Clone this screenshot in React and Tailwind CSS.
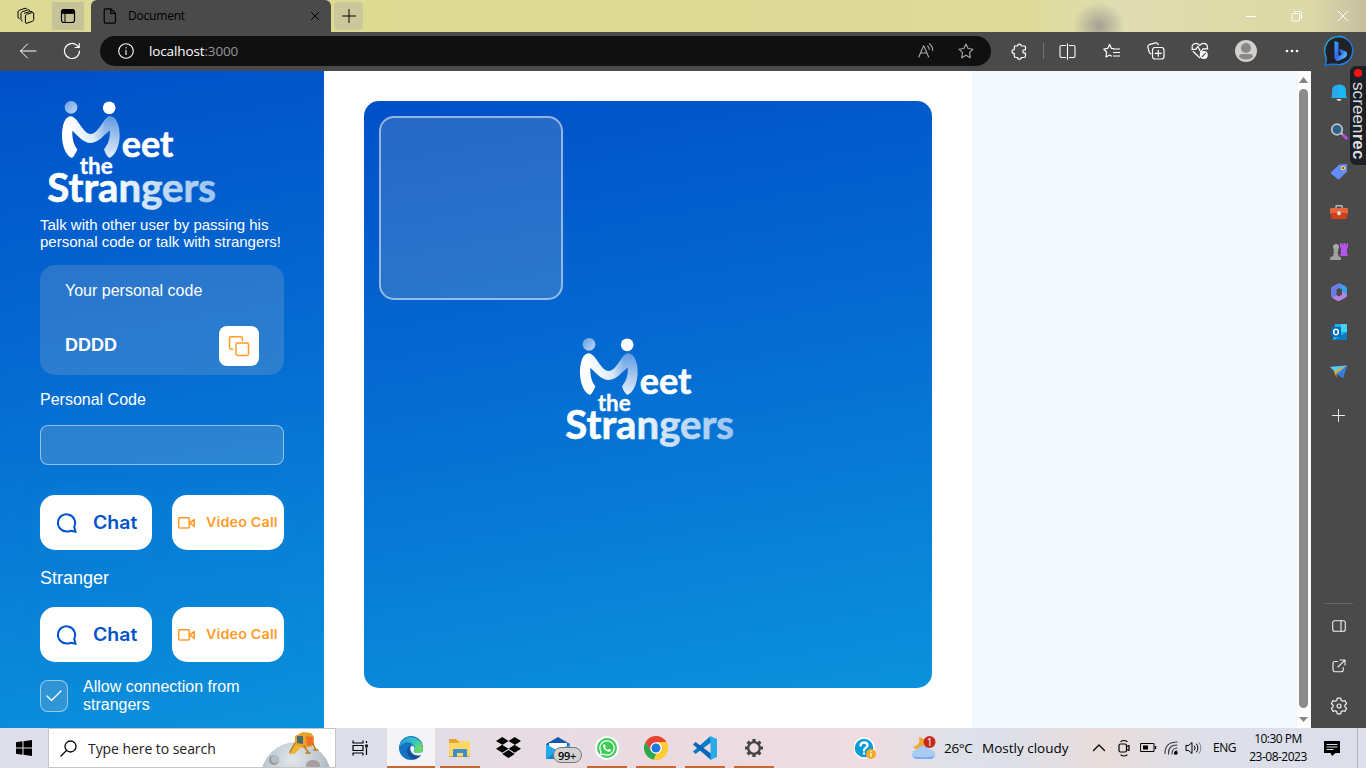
import React from "react";
import { FaDropbox, FaWhatsapp } from "react-icons/fa";

const UI = "font-['Open_Sans','Noto_Sans',sans-serif]";
const ARIAL = "font-['Liberation_Sans',Arial,sans-serif]";

function Svg({ w = 16, h, vb, className = "", children, sw = 1 }) {
  const hh = h || w;
  return (
    <svg width={w} height={hh} viewBox={vb || `0 0 ${w} ${hh}`} fill="none" stroke="currentColor" strokeWidth={sw} strokeLinecap="round" strokeLinejoin="round" className={`block shrink-0 ${className}`}>
      {children}
    </svg>
  );
}

function Logo({ id }) {
  return (
    <svg width="180" height="112" viewBox="30 24 540 336" className="block shrink-0 font-['Lato',sans-serif] font-bold">
      <defs>
        <linearGradient id={`${id}m`} gradientUnits="userSpaceOnUse" x1="125" y1="130" x2="238" y2="95">
          <stop offset="0" stopColor="#fff" />
          <stop offset=".5" stopColor="#dce9f8" />
          <stop offset="1" stopColor="#6ba1e3" />
        </linearGradient>
        <linearGradient id={`${id}r`} gradientUnits="userSpaceOnUse" x1="255" y1="85" x2="238" y2="205">
          <stop offset="0" stopColor="#659de2" />
          <stop offset="1" stopColor="#e8f1fb" />
        </linearGradient>
        <linearGradient id={`${id}h`} x1="0" y1="0" x2="1" y2="1">
          <stop offset="0" stopColor="#649fe5" />
          <stop offset="1" stopColor="#c1daf5" />
        </linearGradient>
        <linearGradient id={`${id}s`} gradientUnits="userSpaceOnUse" x1="54" y1="0" x2="556" y2="0">
          <stop offset="0" stopColor="#fff" />
          <stop offset=".35" stopColor="#fff" />
          <stop offset=".65" stopColor="#c9def6" />
          <stop offset="1" stopColor="#9cc4f0" />
        </linearGradient>
      </defs>
      <circle cx="123" cy="52" r="19" fill={`url(#${id}h)`} />
      <circle cx="237.500" cy="53.500" r="19" fill="#fff" />
      <path d="M122 79C104 79 96 108 96 137C96 170 109 198 126 204C132 200 139 188 142 178C131 164 126 145 127 122C139 131 158 159 182 159C205 159 226 132 239 121L240 79C222 79 207 132 182 132C158 132 143 79 122 79Z" fill={`url(#${id}m)`} />
      <path d="M240 79C259 79 270 107 269 139C268 171 255 198 238 204C230 199 225 188 222 178C234 163 241 145 239 121L226 133L222 98C228 86 234 79 240 79Z" fill={`url(#${id}r)`} />
      <text x="275" y="202" fontSize="111" textLength="155" lengthAdjust="spacingAndGlyphs" fill="#fff" stroke="#fff" strokeWidth="2">eet</text>
      <text x="149" y="251" fontSize="66" textLength="99" lengthAdjust="spacingAndGlyphs" fill="#fff" stroke="#fff" strokeWidth="1">the</text>
      <text x="52" y="337" fontSize="119" textLength="506" lengthAdjust="spacingAndGlyphs" fill={`url(#${id}s)`} stroke={`url(#${id}s)`} strokeWidth="2">Strangers</text>
    </svg>
  );
}

function TitleBar() {
  return (
    <header className="flex h-8 shrink-0 bg-[linear-gradient(90deg,#ddda96_0%,#dedb91_18%,#dcd994_45%,#dedb99_75%,#e0ddb3_82%,#dfdaa8_90%,#ddd8a8_96%,#c6bfa0_100%)] text-black">
      <div className="flex w-[52px] items-center justify-center">
        <Svg w={18}>
          <path d="M7.500 6.200l6-1.700q1.800-.4 2.200 1l1 .5v6.800q0 1-1 1.400l-5.800 2q-1.500.5-1.500-1V9q0-1.200 1-1.600l6-1.900M5.200 14q-1.200-.2-1.200-1.500V6.500q0-1.300 1.200-1.700l6-2q1.200-.3 1.600.8M2.300 11.500Q1 11.300 1 10V5q0-1.200 1.200-1.700L8 1.300q1.500-.4 1.800.7" />
        </Svg>
      </div>
      <div className="mt-0.5 flex h-7 w-8 items-center justify-center bg-[#c7c398]">
        <Svg w={16}>
          <rect x="1.500" y="1.500" width="13" height="13" rx="2.500" strokeWidth="1.200" />
          <path d="M1.500 5V3.500q0-2 2-2h9q2 0 2 2V5z" fill="black" />
          <path d="M5 5v9.500" />
        </Svg>
      </div>
      <div className="ml-[7px] flex w-60 items-center rounded-t-md bg-[#4a4a4a] pl-3 pr-[11px]">
        <Svg w={14} h={16} sw={1.2}>
          <path d="M2.500.8h5.300L12.500 5.500v8q0 1.700-1.700 1.700H2.500Q1.200 15.200 1.200 13.500v-11Q1.200.8 2.500.8zM7.800 1v4.500h4.500" />
        </Svg>
        <span className={`ml-[11px] flex-1 text-[12px] tracking-[-0.200px] ${UI}`}>Document</span>
        <Svg w={10}>
          <path d="M1.200 1.200l7.600 7.600M8.800 1.200L1.200 8.800" />
        </Svg>
      </div>
      <div className="ml-[3px] mt-0.5 flex h-7 w-[29px] items-center justify-center rounded bg-[#ccc89b]">
        <Svg w={14}>
          <path d="M7 .5v13M.5 7h13" />
        </Svg>
      </div>
      <div className="flex flex-1 justify-end pl-[706px]">
        <div className="mr-auto h-8 w-14 bg-[radial-gradient(26px_24px_at_30px_26px,#a3a191_0%,transparent_100%)]" />
        <div className="flex w-[46px] items-center justify-center text-white"><Svg w={10}><path d="M0 5.500h10" /></Svg></div>
        <div className="flex w-[46px] items-center justify-center text-white"><Svg w={12}><rect x="1" y="3.500" width="7.500" height="7.500" rx="1" /><path d="M3.500 1.500h5q2 0 2 2v5" /></Svg></div>
        <div className="flex w-[46px] items-center justify-center text-white"><Svg w={12}><path d="M1 1l10 10M11 1L1 11" /></Svg></div>
      </div>
    </header>
  );
}

function Tool({ className = "w-11", children }) {
  return <div className={`flex shrink-0 items-center justify-center ${className}`}>{children}</div>;
}

function Toolbar() {
  return (
    <div className="flex h-[39px] shrink-0 items-center bg-[#4a4a4a] pb-px text-white">
      <Tool className="w-14"><Svg w={18}><path d="M17 9H1.500M8.500 2L1.500 9l7 7" /></Svg></Tool>
      <Tool className="w-8">
        <Svg w={18} sw={1.2}><path d="M16.500 9a7.500 7.500 0 1 1-2.500-5.600L16 5.500M16.200 1.500v4h-4" /></Svg>
      </Tool>
      <div className="ml-3 flex h-[30px] w-[891px] items-center rounded-full bg-[#101010] pl-[18px] pr-[17px]">
        <Svg w={16} sw={1.1}><circle cx="8" cy="8" r="7.300" /><path d="M8 7.200v4.300M8 4.600v.3" /></Svg>
        <span className={`ml-[15px] flex-1 text-[13.500px] tracking-[-0.130px] ${UI}`}>localhost<span className="text-[#969696]">:3000</span></span>
        <Svg w={16} className="mr-6 text-[#aaa]" sw={1.1}><path d="M.8 14L5.500 3h.4l4.700 11M2.700 10h6M9.500 3q1.700 1.300 1.700 3.400M11.300.8q3.600 2.500 3.300 6.600" /></Svg>
        <Svg w={16} className="text-[#aaa]" sw={1.1}><path d="M8 1l2.100 4.500 4.900.7-3.500 3.500.8 5L8 12.300l-4.300 2.400.8-5L1 6.200l4.900-.7z" /></Svg>
      </div>
      <Tool className="ml-[6px] w-11">
        <Svg w={17} sw={1.2}><path d="M3.500 3h3.200q-.3-1.800 1.700-1.800t1.800 1.800h3.300q1 0 1 1v2.800h-1q-1.700 0-1.700 1.700t1.700 1.700h1V13q0 1.500-1.500 1.500h-2.800q.2 1.700-1.800 1.700t-1.700-1.700H5q-1.800 0-1.800-1.700v-2.400Q1 10.500 1 8.600t2.200-1.900z" /></Svg>
      </Tool>
      <div className="ml-[2px] h-4 w-px bg-[#747474]" />
      <Tool className="ml-[1px] w-11"><Svg w={17} sw={1.1}><path d="M6.500 2.500h-4q-1.500 0-1.500 1.500v9q0 1.500 1.500 1.500h4M10.500 2.500h4q1.500 0 1.500 1.500v9q0 1.500-1.500 1.500h-4M8.500.8v15.400" /></Svg></Tool>
      <Tool><Svg w={17} sw={1.2}><path d="M10.500 5.700L8.500 5.400 6.600 1.400 4.700 5.400.8 6 3.600 9 3 14l3.600-2 1.700 1M10.500 6h6M10.500 9.500h6M10.500 13h6" /></Svg></Tool>
      <Tool className="w-[45px]"><Svg w={18} sw={1.2}><rect x="5.500" y="5.500" width="11.500" height="11.500" rx="2.500" /><path d="M11.250 8.300v6M8.250 11.300h6M4 11.800q-1.500-.3-1.800-1.600L.9 5.300q-.4-2 1.300-2.600L8.600.9q1.900-.4 2.700 1.800" /></Svg></Tool>
      <Tool>
        <Svg w={18} sw={1.2}><path d="M8.500 15.500L2.200 9.500M1.200 6.500q-.8-4.600 3.600-5.200Q7 1.200 8.700 3.500 10.500 1.200 12.800 1.300q4.300.6 3.500 5M.8 7.300h4l2-3 3 6 2-3.500h5" /><circle cx="12.800" cy="13" r="4" fill="white" stroke="none" /><path d="M11.200 14.700l3.200-3.300" stroke="#444" /></Svg>
      </Tool>
      <Tool className="w-[47px]">
        <Svg w={22}><g stroke="none"><circle cx="11" cy="11" r="11" fill="#d2d0ce" /><circle cx="11" cy="8" r="5" fill="#8a8886" /><path d="M4 17q0-3 3-3h8q3 0 3 3a11 11 0 0 1-14 0" fill="#8a8886" /></g></Svg>
      </Tool>
      <Tool className="w-[46px]"><Svg w={14} h={4}><g fill="white" stroke="none"><circle cx="2" cy="2" r="1.300" /><circle cx="7" cy="2" r="1.300" /><circle cx="12" cy="2" r="1.300" /></g></Svg></Tool>
      <Tool className="ml-[9px] w-[30px]">
        <Svg w={30} h={32}>
          <defs>
            <linearGradient id="ring" x1="0" y1="0" x2="1" y2="1"><stop stopColor="#25c7e5" /><stop offset=".55" stopColor="#1672e0" /><stop offset="1" stopColor="#2587ff" /></linearGradient>
            <linearGradient id="bing" x1="0" y1="0" x2="1" y2="1"><stop stopColor="#2fa8ff" /><stop offset=".5" stopColor="#3268f2" /><stop offset="1" stopColor="#62e2ff" /></linearGradient>
          </defs>
          <path d="M1.200 30.500Q3 26 1.800 21A14 14 0 1 1 12 29.300Q6 28.800 1.200 30.500z" fill="#202124" stroke="url(#ring)" strokeWidth="1.400" />
          <path d="M10.500 6l4 1.400v13.800l4-2.400-1.900-.9-1.500-4 6 2.200q2.700 1.200 1.800 4.200-.6 1.800-2.400 2.800L15 25.600q-1.300.7-2.600 0-1.900-1-1.900-3.100z" fill="url(#bing)" stroke="none" />
        </Svg>
      </Tool>
    </div>
  );
}

function ActionRow() {
  return (
    <div className="flex gap-5 font-['Inter',sans-serif] font-semibold">
      <button className="flex h-[55px] w-28 items-center rounded-[15px] bg-white pl-[17px] text-[18px] text-[#0352cc] shadow-[0_0_20px_rgba(20,150,220,0.3)]">
        <Svg w={20} sw={2}><path d="M17.200 13.800A8.600 8.600 0 1 0 10 18.500q2.500.2 4.200-.8l4.200 1z" strokeLinejoin="miter" /></Svg>
        <span className="ml-4 inline-block origin-left scale-x-[1.08]">Chat</span>
      </button>
      <button className="flex h-[55px] w-28 items-center rounded-[15px] bg-white pl-[5px] text-[13px] text-[#ff9b29] shadow-[0_0_20px_rgba(20,150,220,0.3)]">
        <Svg w={20} h={14} sw={1.6}><rect x="1.700" y="1.700" width="10.600" height="10.300" rx="1" /><path d="M12.800 6.900L17.200 3.500v7z" /></Svg>
        <span className="ml-[9px] inline-block origin-left scale-x-[1.1] whitespace-nowrap tracking-[0.150px]">Video Call</span>
      </button>
    </div>
  );
}

function Dashboard() {
  return (
    <aside className={`flex w-[324px] shrink-0 flex-col overflow-hidden bg-[linear-gradient(170deg,#0050c8_0%,#056cd2_45%,#0b92dc_100%)] px-10 text-white ${ARIAL}`}>
      <div className="mt-[27px]"><Logo id="side" /></div>
      <p className="mt-[6px] whitespace-nowrap text-[15px] leading-[17px]">Talk with other user by passing his<br />personal code or talk with strangers!</p>
      <section className="mt-[15px] flex h-[110px] shrink-0 flex-col rounded-[15px] bg-[rgba(196,196,196,0.2)] px-[25px] pt-[17px]">
        <p className="text-[16px] leading-[18px]">Your personal code</p>
        <div className="mt-[26px] flex items-center justify-between">
          <p className="pb-[2px] text-[18px] font-bold leading-5">DDDD</p>
          <button className="flex size-10 items-center justify-center rounded-lg bg-white text-[#ff9b29]">
            <Svg w={22} sw={1.5}><path d="M14.300 5.500V3.300q0-1.500-1.500-1.500H3Q1.500 1.800 1.500 3.300v9.200Q1.500 14.200 3 14.200h1.700" /><rect x="8" y="8" width="12.500" height="12.500" rx="1.700" /></Svg>
          </button>
        </div>
      </section>
      <p className="mt-4 text-[16px] leading-[18px]">Personal Code</p>
      <div className="mb-[30px] mt-4 h-10 shrink-0 rounded-lg border border-white/50 bg-[rgba(196,196,196,0.2)]" />
      <ActionRow />
      <p className="mb-[19px] mt-[18px] text-[18px] leading-5">Stranger</p>
      <ActionRow />
      <div className="mt-4 flex">
        <div className="mt-[2px] flex h-8 w-7 items-center justify-center rounded-lg border border-white/50 bg-[rgba(196,196,196,0.2)]">
          <Svg w={16} h={12} sw={1.4}><path d="M1 6l4.500 4.500L15 1" /></Svg>
        </div>
        <p className="ml-[15px] whitespace-nowrap text-[16px] leading-[18px]">Allow connection from<br />strangers</p>
      </div>
    </aside>
  );
}

function CallArea() {
  return (
    <main className="w-[648px] shrink-0 bg-white px-10 pt-[30px]">
      <div className="relative flex h-[587px] items-center justify-center rounded-[15px] bg-[linear-gradient(170deg,#0050c8_0%,#056cd2_45%,#0b92dc_100%)]">
        <div className="absolute left-[15px] top-[15px] size-[184px] rounded-[15px] border-2 border-white/50 bg-[rgba(196,196,196,0.2)]" />
        <div className="mb-[7px]"><Logo id="call" /></div>
      </div>
    </main>
  );
}

function Scrollbar() {
  return (
    <div className="flex w-[13px] shrink-0 flex-col items-center bg-[#fcfcfc] pb-[5px] pr-[2px] pt-1.5">
      <Svg w={9} h={7}><path d="M4.500 0L9 6H0z" fill="#858585" stroke="none" /></Svg>
      <div className="mb-2 mt-[5px] w-[9px] flex-1 rounded-full bg-[#8b8b8b]" />
      <Svg w={9} h={7}><path d="M0 1h9L4.500 6z" fill="#858585" stroke="none" /></Svg>
    </div>
  );
}

function EdgeRail() {
  return (
    <div className="flex w-[55px] shrink-0 flex-col items-center bg-[#4a4a4a] text-[#eee]">
      <div className="flex h-[321px] w-full flex-col items-center pt-px">
        <div className="flex h-10 items-center"><Svg w={18}><g stroke="none"><path d="M2 13V8q0-6.500 7-6.500T16 8v5l1 2H1z" fill="#27a9ee" /><path d="M9 1.500q7 0 7 6.500v5l1 2H9z" fill="#16c1f2" opacity=".7" /><path d="M6.500 16h5q-.5 2-2.500 2t-2.500-2" fill="#ddd" /></g></Svg></div>
        <div className="flex h-10 items-center"><Svg w={18}><circle cx="7" cy="6.500" r="5.300" fill="#2d6388" stroke="#bdc4c7" strokeWidth="1.700" /><path d="M11.500 10.500l2 1.700" stroke="#c8c8c8" strokeWidth="2" /><path d="M13.500 12.500l3 2.700" stroke="#b54bee" strokeWidth="3" /></Svg></div>
        <div className="flex h-10 items-center"><Svg w={18}><path d="M9.500 1.500L17 1v7.500L9.500 16q-1 .8-2 0L1.200 10.700q-.8-.9 0-1.800z" fill="#648bff" stroke="none" /><circle cx="13" cy="5" r="1.700" fill="#34518b" stroke="#ffd33b" strokeWidth="1.300" /></Svg></div>
        <div className="flex h-10 items-center"><Svg w={18}><path d="M6 5V3.500q0-.8.800-.8h4.500q.8 0 .8.800V5" stroke="#bbb" strokeWidth="1.500" /><g stroke="none"><rect y="5" width="18" height="6" rx="1" fill="#e7653a" /><path d="M1 10h16v5q0 1-1 1H2q-1 0-1-1z" fill="#cf4019" /><rect x="7.300" y="8.300" width="3.400" height="4" rx="1" fill="#ddd" /></g></Svg></div>
        <div className="flex h-10 items-center"><Svg w={18} h={20}><g stroke="none"><path d="M10 1h2v1.500h1.500V1h2v1.500H17V1h1v4l-1 1v5l1 3H10l1-3V6l-1-1z" fill="#b653ed" /><circle cx="6" cy="5" r="3" fill="#aaa" /><path d="M3 8h6l-1.500 2 1 4 2.500 1.500V18h-11v-2.500L3 14l1-4z" fill="#a1a1a1" /></g></Svg></div>
        <div className="flex h-10 items-center"><Svg w={18} h={20}><g stroke="none"><path d="M9 1l6.500 3.300Q17 5.100 17 7v7L12 11.500v-4L8.500 5.500z" fill="#37a3ef" /><path d="M9 1L2.500 4.500Q1 5.300 1 7v6q0 1.500 1.500 2.500L6.500 13V7.500L12 4.500z" fill="#6a7de6" /><path d="M17 12.500v1q0 1.300-1.300 2L10 18.800q-1.500.6-3 0L1.700 15.500 6.500 13 9 14.500l3-2v-3z" fill="#b183e3" /></g></Svg></div>
        <div className="flex h-10 items-center"><Svg w={18}><g stroke="none"><path d="M5 1h11q1 0 1 1v15H3v-5z" fill="#1bb0ed" /><path d="M11 1h5q1 0 1 1v7h-6z" fill="#49d2f8" /><path d="M4 17l13-8v8z" fill="#087bc3" /><rect x="1" y="4" width="10" height="10" rx="1" fill="#0568b4" /></g><ellipse cx="6" cy="9" rx="2.300" ry="2.700" stroke="white" strokeWidth="1.500" /></Svg></div>
        <div className="flex h-10 items-center"><Svg w={18}><g stroke="none"><path d="M0 4l17-1.500L13 15 6.500 10.500z" fill="#3ba1e9" /><path d="M0 4l17-1.500L5.500 9z" fill="#57cbed" /><path d="M17 2.500L6.500 10v4.700L4 8.500z" fill="#f2a91e" /><path d="M17 2.500L8 10.800l5 4.200z" fill="#3979de" /></g></Svg></div>
      </div>
      <Svg w={13} className="mt-[17px]"><path d="M6.500.5v12M.5 6.500h12" /></Svg>
      <div className="mt-[181px] h-px w-7 bg-[#656565]" />
      <Svg w={14} h={12} className="mt-4" sw={1.1}><rect x=".7" y=".7" width="12.600" height="10.600" rx="2" /><path d="M9 .7v10.600" /></Svg>
      <Svg w={14} className="mt-[27px]" sw={1.1}><path d="M5.500 2.500H3Q1 2.500 1 4.500v6Q1 12.700 3 12.700h6.200q2 0 2-2V8.500M8 1h5v5M6 8l6.700-6.700" /></Svg>
      <Svg w={18} className="mt-6" sw={1.2}><circle cx="9" cy="9" r="2" /><path d="M7.300 1.200h3.400l.6 2.300 1.300.8 2.300-.7 1.700 2.900L14.900 8.200v1.600l1.700 1.700-1.700 2.900-2.300-.7-1.300.8-.6 2.300H7.300l-.6-2.300-1.300-.8-2.300.7-1.700-2.900L3.100 9.800V8.200L1.400 6.500l1.700-2.900 2.300.7 1.300-.8z" /></Svg>
    </div>
  );
}

function TaskApp({ children, active, line = true }) {
  return (
    <div className="flex w-[49px] shrink-0 justify-center">
      <div className={`flex h-10 flex-col items-center ${active ? "w-12 bg-[#f4f3f6]" : "w-10"}`}>
        <div className="flex h-[38px] items-center justify-center pt-[2px]">{children}</div>
        {line && <div className="h-0.5 w-full bg-[#cc652e]" />}
      </div>
    </div>
  );
}

function Taskbar() {
  return (
    <footer className={`flex h-10 shrink-0 items-center overflow-hidden bg-[linear-gradient(90deg,#dedeeb_0%,#dcdeea_27%,#e7dce4_36%,#ebdbe0_50%,#eedde1_64%,#dde1e9_70%,#dee0e9_74%,#e8dcd9_81%,#dedfe9_87%,#dcdeeb_100%)] text-black ${UI}`}>
      <div className="flex w-12 shrink-0 justify-center">
        <Svg w={16}><path d="M0 2.200l6.500-.9v6.200H0zM7.500 1.200L16 0v7.500H7.500zM0 8.500h6.500v6.200L0 13.800zM7.500 8.500H16V16l-8.500-1.200z" fill="black" stroke="none" /></Svg>
      </div>
      <div className="flex h-10 w-72 shrink-0 items-center border border-[#c5c5c8] bg-white pl-[11px]">
        <Svg w={17} sw={1.3}><circle cx="10.500" cy="6.500" r="5.500" /><path d="M6.500 10.500L1 16" /></Svg>
        <span className="ml-[11px] w-[174px] whitespace-nowrap text-[14px] tracking-[-0.060px] text-[#222]">Type here to search</span>
        <Svg w={72} h={36} className="self-end">
          <defs><radialGradient id="moon" cx=".45" cy=".25" r=".7"><stop stopColor="#e1e6e9" /><stop offset=".6" stopColor="#bcc6ce" /><stop offset="1" stopColor="#8d9aa4" /></radialGradient></defs>
          <g stroke="none">
            <circle cx="34" cy="46" r="35" fill="url(#moon)" />
            <circle cx="12" cy="29" r="5" fill="#8d99a3" /><circle cx="13" cy="28" r="4" fill="#b4bec7" />
            <ellipse cx="51" cy="34" rx="7" ry="5" fill="#a59fa2" />
            <path d="M33 5l8-4 8 1 3 4-1 9-9 2-9-2z" fill="#e6a326" />
            <path d="M35 5h6v8l-6-1z" fill="#486b72" /><path d="M44 5l7 1 1 8-7 1z" fill="#ef6e23" />
            <path d="M32 14l8 2-8 7h-5z" fill="#efb634" />
          </g>
          <path d="M42 15l4 6M51 13l3 6M33 12l-5 9M44 22h4M52 19h4" stroke="#bc7c14" strokeWidth="1.500" />
        </Svg>
      </div>
      <div className="flex w-[48px] shrink-0 justify-center">
        <Svg w={16}><path d="M1 .5V3h10V.5M1 15.500V13h10v2.500M1 5.500h10v5H1zM14.500 1v2M14.500 8v7" strokeWidth="1.200" strokeLinecap="butt" /><path d="M13.200 4.500h2.600v3h-2.600z" fill="black" stroke="none" /></Svg>
      </div>
      <div className="flex shrink-0 pl-[2px]">
        <TaskApp active>
          <Svg w={24}>
            <defs><linearGradient id="edgeTop" x1="0" y1="0" x2="1" y2=".5"><stop stopColor="#229edb" /><stop offset=".6" stopColor="#35c2c3" /><stop offset="1" stopColor="#67dc63" /></linearGradient></defs>
            <g stroke="none">
              <circle cx="12" cy="12" r="12" fill="#1473c4" />
              <path d="M.3 10.500A12 12 0 0 1 24 12.500q-.5 4.500-5.200 4.500-3.500 0-4.200-1.500 2.500-3 .5-6Q9 2.500.3 10.500z" fill="url(#edgeTop)" />
              <path d="M11 9.500Q6 13 9 19q3 5 8 4 4-1.500 5.500-4.500-4 2-8.500 0-5-3-3-9" fill="#174e91" />
              <path d="M14 9.800q3 2.200.5 5.700 1.500 2 5 1.500l4.500-1-1.500 3q-6 1.500-9-1.500-3.500-4-1.500-7.200 1-.8 2-.5" fill="#f4f3f6" />
            </g>
          </Svg>
        </TaskApp>
        <TaskApp>
          <Svg w={22} h={20}><g stroke="none"><path d="M0 1h7l2 2h12v16H0z" fill="#e6a52a" /><path d="M0 5h9l2-2h10v15H0z" fill="#ffd668" /><path d="M4 19v-7q0-1 1-1h12q1 0 1 1v7h-4v-4H8v4z" fill="#3d8ccd" /></g></Svg>
        </TaskApp>
        <TaskApp line={false}><div className="pb-[2px]"><FaDropbox size={25} /></div></TaskApp>
        <TaskApp line={false}>
          <div className="relative">
            <Svg w={24}><g stroke="none"><path d="M0 8l12-7 12 7v14H0z" fill="#1559a8" /><path d="M3 7h18v8H3z" fill="#fff" /><path d="M0 8l12 7 12-7v15H0z" fill="#25a9e8" /><path d="M0 23l12-9 12 9z" fill="#0c86d3" /></g></Svg>
            <span className="absolute left-[7px] top-[11px] flex h-4 w-[29px] items-center justify-center rounded-full border border-[#777] bg-[#d2d2d2] text-[11px] font-semibold leading-none tracking-[-0.300px]">99+</span>
          </div>
        </TaskApp>
        <TaskApp><div className="flex size-6 items-center justify-center rounded-full border-2 border-white bg-[#3bcc55] text-white"><FaWhatsapp size={18} /></div></TaskApp>
        <TaskApp>
          <Svg w={24}><g stroke="none"><circle cx="12" cy="12" r="12" fill="#ffcc37" /><path d="M1.600 6A12 12 0 0 1 22.400 6H12z" fill="#e84435" /><path d="M1.600 6L7 15l5 3-2.500 5.700A12 12 0 0 1 1.600 6z" fill="#2ca755" /><path d="M1.600 6H14l-7 9z" fill="#e84435" /><path d="M1.600 6L7 15l2 2-3-1z" fill="#2ca755" /><path d="M12 6h10.400A12 12 0 0 1 9.500 23.700L17 15z" fill="#ffcc37" /><circle cx="12" cy="12" r="5.800" fill="white" /><circle cx="12" cy="12" r="4.500" fill="#1b78e5" /></g></Svg>
        </TaskApp>
        <TaskApp>
          <Svg w={24}><g stroke="none"><path d="M17.500 0L0 15.500l2.500 2.500L18 6.500z" fill="#087cc7" /><path d="M0 8.500L2.500 6 18 17.500V24z" fill="#0966b8" /><path d="M17.500 0v24L24 21V3z" fill="#29abe9" /></g></Svg>
        </TaskApp>
        <TaskApp>
          <Svg w={20}><circle cx="10" cy="10" r="5.800" stroke="#444" strokeWidth="2.300" /><path d="M10 1v3M10 16v3M1 10h3M16 10h3M3.600 3.600l2.200 2.200M14.200 14.200l2.200 2.200M16.400 3.600l-2.200 2.200M5.800 14.200l-2.200 2.200" stroke="#444" strokeWidth="3.200" strokeLinecap="butt" /></Svg>
        </TaskApp>
      </div>
      <div className="ml-[76px] shrink-0">
        <Svg w={22}><g stroke="none"><circle cx="10" cy="11" r="10" fill="#0b9bd7" stroke="white" strokeWidth="1.500" /><circle cx="17" cy="17" r="5" fill="#f4aa21" /></g><path d="M6.500 8.500Q7 5.500 10 5.500q3.500 0 3.500 2.800 0 1.700-2 2.700-1.500.8-1.500 2.500M10 16.500v.2" stroke="white" strokeWidth="2.300" /><path d="M17 16.500v2.700M17 14.500v.1" stroke="white" strokeWidth="1.300" /></Svg>
      </div>
      <div className="ml-[35px] shrink-0">
        <Svg w={26} h={26}><g stroke="none"><path d="M8 2Q10 10 2 12q6 6 12 0 4-7-6-10" fill="#f4a62b" /><path d="M6 24Q1 24 1 19.500 1 15 6 14.500q2-4 6.500-4T19 15q5 0 5 4.500 0 4.500-5 4.500z" fill="#a9cbf6" /><path d="M2 21.500q8 1.500 21.500 0-1.500 2.500-4.500 2.500H6q-3 0-4-2.500" fill="#7ba9eb" /><circle cx="18.500" cy="7" r="6" fill="#c42b1c" /></g><text x="18.500" y="10.700" textAnchor="middle" fontSize="10" fill="white" stroke="none">1</text></Svg>
      </div>
      <span className="ml-[7px] w-[38px] shrink-0 whitespace-nowrap text-[13.500px] tracking-[-0.300px]">26°C</span>
      <span className="w-[106px] shrink-0 whitespace-nowrap text-[13.500px]">Mostly cloudy</span>
      <div className="flex shrink-0 items-center">
        <Svg w={22} h={16}><path d="M5.500 10.500L11 5l5.500 5.500" strokeWidth="1.300" /></Svg>
        <Svg w={12} h={18} className="ml-[8px]" sw={1.2}><path d="M3 2.500q3-2 6 0M3 16q3 2 6 0" /><rect x="1" y="5" width="7.500" height="8" rx="1.500" /><path d="M8.500 7.500l2.500-1v5l-2.500-1" /></Svg>
        <Svg w={17} h={12} className="ml-[10px]"><rect x="1" y="1.500" width="13" height="8" /><path d="M15.500 4v3" strokeWidth="1.500" strokeLinecap="butt" /><path d="M3 3.500h5v4H3z" fill="black" stroke="none" /></Svg>
        <Svg w={16} className="ml-[7px]" sw={1.1}><path d="M1 13.500Q1 2 13 2M4.500 14Q4 5 13 5M8 14Q8 8 13 8" opacity=".75" /><path d="M10.500 14q0-3 2.500-3" /><circle cx="12" cy="13" r="1.700" fill="black" stroke="none" /></Svg>
        <Svg w={17} h={16} className="ml-[5px]"><path d="M1 5.500v5h2.500L7 13.500v-11L3.500 5.500zM9.500 6q1.500 2 0 4M11.500 4q3 4 0 8" /><path d="M14 2.500q4 5.500 0 11" opacity=".4" /></Svg>
      </div>
      <span className="ml-[11px] w-[35px] shrink-0 text-[12px] tracking-[-0.500px]">ENG</span>
      <div className="w-[60px] shrink-0 whitespace-nowrap text-center text-[12px] leading-[18px] tracking-[-0.500px]">10:30 PM<br />23-08-2023</div>
      <Svg w={16} h={17} className="ml-4"><path d="M0 1h16v12h-4.500L8 16l-1.500-3H0z" fill="black" stroke="none" /><path d="M3 4.500h10M3 7h10M3 9.500h6" stroke="#dcdeeb" /></Svg>
      <div className="ml-[17px] h-10 w-px shrink-0 bg-[#b0b2be]" />
    </footer>
  );
}

export default function App() {
  return (
    <div className="relative flex h-[768px] w-[1366px] flex-col overflow-hidden">
      <TitleBar />
      <Toolbar />
      <div className="flex h-[657px] shrink-0">
        <Dashboard />
        <CallArea />
        <div className="flex-1 bg-[#f4f9fe]" />
        <Scrollbar />
        <EdgeRail />
      </div>
      <Taskbar />
      <div className="absolute right-0 top-[66px] flex h-[99px] w-4 items-center rounded-l-md bg-[#1c1f25] pt-[3px] font-['Liberation_Sans',sans-serif] text-[17px] leading-[16px] text-[#ddd] [writing-mode:vertical-rl]">
        <span className="mb-[5px] size-2 shrink-0 rounded-full bg-[#ff1111]" />
        <span className="whitespace-nowrap tracking-[0.100px]">screen<b>rec</b></span>
      </div>
    </div>
  );
}
